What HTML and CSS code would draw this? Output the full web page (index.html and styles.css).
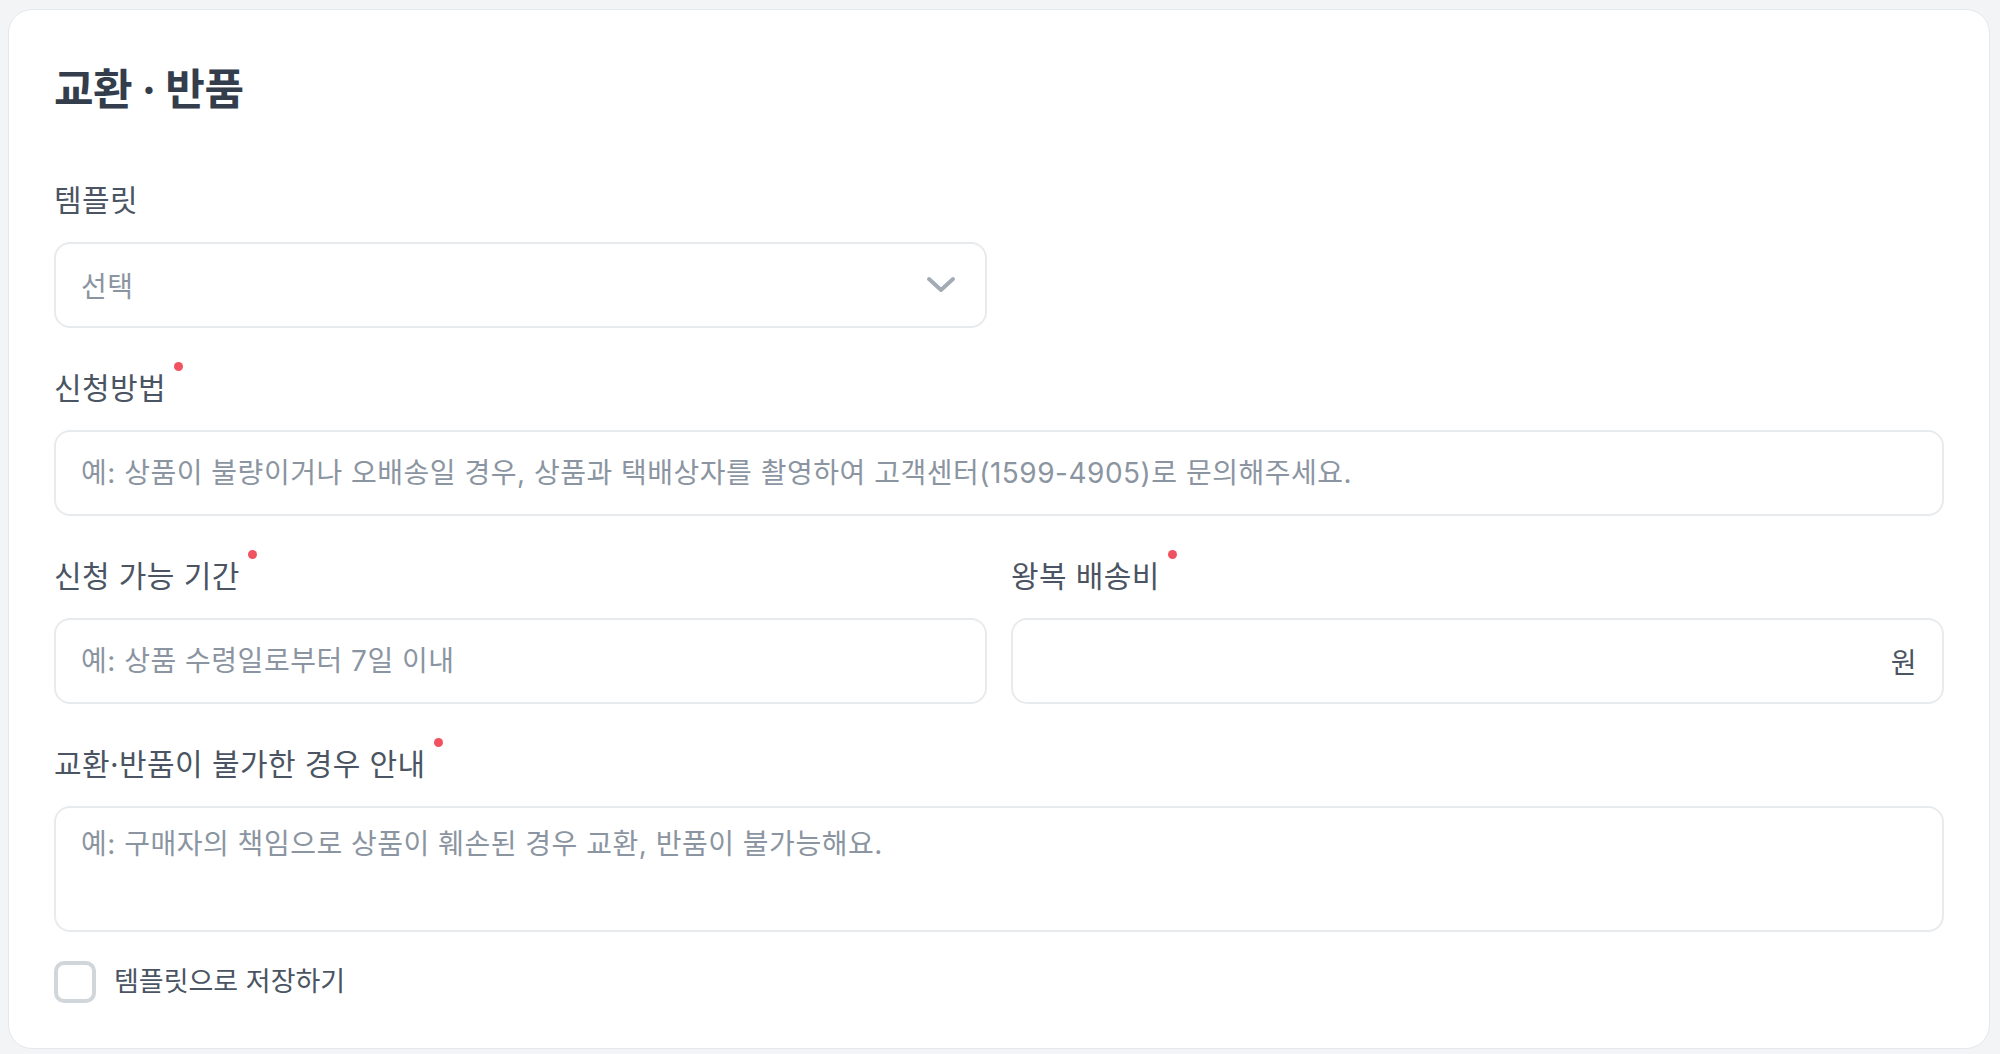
FILE: index.html
```html
<!DOCTYPE html>
<html lang="ko">
<head>
<meta charset="utf-8">
<title>교환 · 반품</title>
<link rel="stylesheet" href="styles.css">
</head>
<body>
<section class="card">
  <h2 class="title">교환 · 반품</h2>
  <div class="form">
    <div class="field half">
      <label class="label">템플릿</label>
      <div class="select">
        <span class="select-text">선택</span>
        <svg class="chevron" width="30" height="18" viewBox="0 0 30 18" aria-hidden="true">
          <path d="M3 3 L15 14 L27 3" fill="none" stroke="#a3abb5" stroke-width="4" stroke-linecap="round" stroke-linejoin="round"/>
        </svg>
      </div>
    </div>
    <div class="field">
      <label class="label">신청방법<span class="req"></span></label>
      <input class="input" type="text" placeholder="예: 상품이 불량이거나 오배송일 경우, 상품과 택배상자를 촬영하여 고객센터(1599-4905)로 문의해주세요.">
    </div>
    <div class="row">
      <div class="field">
        <label class="label">신청 가능 기간<span class="req"></span></label>
        <input class="input" type="text" placeholder="예: 상품 수령일로부터 7일 이내">
      </div>
      <div class="field">
        <label class="label">왕복 배송비<span class="req"></span></label>
        <div class="input-suffix">
          <input class="bare" type="text">
          <span class="suffix">원</span>
        </div>
      </div>
    </div>
    <div class="field">
      <label class="label">교환·반품이 불가한 경우 안내<span class="req"></span></label>
      <textarea class="textarea" placeholder="예: 구매자의 책임으로 상품이 훼손된 경우 교환, 반품이 불가능해요."></textarea>
    </div>
    <label class="check-row">
      <span class="checkbox"></span>
      <span class="check-label">템플릿으로 저장하기</span>
    </label>
  </div>
</section>
</body>
</html>
```

FILE: styles.css
```css
* { box-sizing: border-box; }

html, body {
  margin: 0;
  background: #f2f4f6;
}

body {
  padding: 9px 10px 0 8px;
  font-family: Inter, "Noto Sans CJK KR", sans-serif;
  color: #4e5968;
}

.card {
  background: #fff;
  border: 1px solid #e5e8eb;
  border-radius: 24px;
  padding: 45px;
}

.title {
  margin: 6px 0 63px;
  font-size: 43px;
  line-height: 56px;
  font-weight: 700;
  color: #333d4b;
  letter-spacing: -0.5px;
}

.form {
  display: flex;
  flex-direction: column;
  gap: 40px;
}

.field {
  display: flex;
  flex-direction: column;
}

.field.half {
  width: calc(50% - 12px);
}

.label {
  display: flex;
  align-items: flex-start;
  font-size: 30px;
  line-height: 40px;
  font-weight: 400;
  color: #4a5462;
  letter-spacing: 0.4px;
  margin-bottom: 22px;
}

.req {
  width: 9px;
  height: 9px;
  border-radius: 50%;
  background: #f0525f;
  margin-left: 8px;
  margin-top: -6px;
}

.select,
.input,
.input-suffix,
.textarea {
  border: 2px solid #e8ebee;
  border-radius: 16px;
  background: #fff;
  font-family: Inter, "Noto Sans CJK KR", sans-serif;
  font-size: 28px;
  letter-spacing: 0.5px;
  color: #333d4b;
}

.select {
  height: 86px;
  display: flex;
  align-items: center;
  justify-content: space-between;
  padding: 0 29px 0 25px;
}

.select-text {
  color: #8b95a1;
}

.input {
  height: 86px;
  width: 100%;
  padding: 0 25px;
  outline: none;
}

.input::placeholder,
.textarea::placeholder {
  color: #8b95a1;
  opacity: 1;
}

.row {
  display: grid;
  grid-template-columns: 1fr 1fr;
  gap: 24px;
}

.input-suffix {
  height: 86px;
  display: flex;
  align-items: center;
  padding: 0 25px;
}

.bare {
  flex: 1;
  border: 0;
  outline: none;
  font: inherit;
  background: transparent;
  min-width: 0;
}

.suffix {
  color: #4a5462;
}

.textarea {
  height: 126px;
  width: 100%;
  resize: none;
  padding: 16px 25px;
  line-height: 40px;
  outline: none;
  display: block;
}

.check-row {
  display: flex;
  align-items: center;
  gap: 18px;
  margin-top: -11px;
}

.checkbox {
  width: 42px;
  height: 42px;
  border: 4px solid #d1d6db;
  border-radius: 10px;
  background: #fff;
}

.check-label {
  font-size: 27px;
  line-height: 40px;
  color: #4a5462;
}
```
